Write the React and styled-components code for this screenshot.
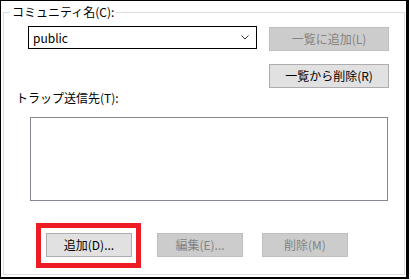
import React from 'react'
import styled, { createGlobalStyle } from 'styled-components'

const GlobalStyle = createGlobalStyle`
  html, body {
    margin: 0;
    padding: 0;
    background: #ffffff;
  }
  body {
    font-family: "Noto Sans CJK JP", "Noto Sans", sans-serif;
    font-size: 12px;
    color: #000000;
  }
`

const Frame = styled.div`
  width: 405px;
  height: 276px;
  border-style: solid;
  border-color: #000000;
  border-width: 1px 3px 2px 1px;
  background: #ffffff;
  overflow: hidden;
`

const Group = styled.fieldset`
  margin: 3px 1px 0 2px;
  padding: 0 0 6px 0;
  border: 1px solid #dcdcdc;
  min-width: 0;
  display: flex;
  flex-direction: column;
  align-items: flex-start;
`

const Legend = styled.legend`
  margin-left: 6px;
  padding: 0 2px;
  font-size: 12px;
  line-height: 16px;
  color: #000000;
`

const TopRow = styled.div`
  display: flex;
  align-items: flex-start;
  gap: 12px;
  margin-top: 6px;
  padding-left: 24px;
`

const Combo = styled.div`
  box-sizing: border-box;
  width: 229px;
  height: 23px;
  border: 1px solid #000000;
  background: #ffffff;
  display: flex;
  align-items: center;
  justify-content: space-between;
  padding: 0 7px 0 4px;
  font-size: 12px;
  color: #000000;
`

const Chevron = () => (
  <svg width="8" height="5" viewBox="0 0 8 5">
    <path d="M0.5 0.5 L4 4 L7.5 0.5" fill="none" stroke="#333333" strokeWidth="1" />
  </svg>
)

const Button = styled.button`
  box-sizing: border-box;
  width: ${props => props.$width || 86}px;
  height: 24px;
  margin: ${props => props.$margin || '0'};
  padding: 0;
  border: 1px solid #adadad;
  background: #e1e1e1;
  font-family: "Noto Sans CJK JP", "Noto Sans", sans-serif;
  font-size: 12px;
  line-height: 16px;
  color: #000000;

  &:disabled {
    border-color: #bfbfbf;
    background: #cccccc;
    color: #838383;
  }
`

const Label = styled.div`
  margin: 2px 0 0 12px;
  font-size: 12px;
  line-height: 16px;
`

const ListBox = styled.div`
  box-sizing: border-box;
  width: 358px;
  height: 84px;
  margin: 11px 0 0 26px;
  border: 1px solid #828790;
  background: #ffffff;
`

const ButtonRow = styled.div`
  display: flex;
  align-items: flex-start;
  margin: 22px 0 0 32px;
`

const Highlight = styled.div`
  display: flex;
  border: 5px solid #ed1c24;
  padding: 5px 4px 6px 5px;
`

export default function App() {
  return (
    <>
      <GlobalStyle />
      <Frame>
        <Group>
          <Legend>コミュニティ名(C):</Legend>
          <TopRow>
            <Combo>
              <span>public</span>
              <Chevron />
            </Combo>
            <Button $width={120} $margin="1px 0 0 0" disabled>一覧に追加(L)</Button>
          </TopRow>
          <Button $width={120} $margin="13px 0 0 265px">一覧から削除(R)</Button>
          <Label>トラップ送信先(T):</Label>
          <ListBox />
          <ButtonRow>
            <Highlight>
              <Button>追加(D)...</Button>
            </Highlight>
            <Button $margin="10px 0 0 16px" disabled>編集(E)...</Button>
            <Button $margin="10px 0 0 19px" disabled>削除(M)</Button>
          </ButtonRow>
        </Group>
      </Frame>
    </>
  )
}
